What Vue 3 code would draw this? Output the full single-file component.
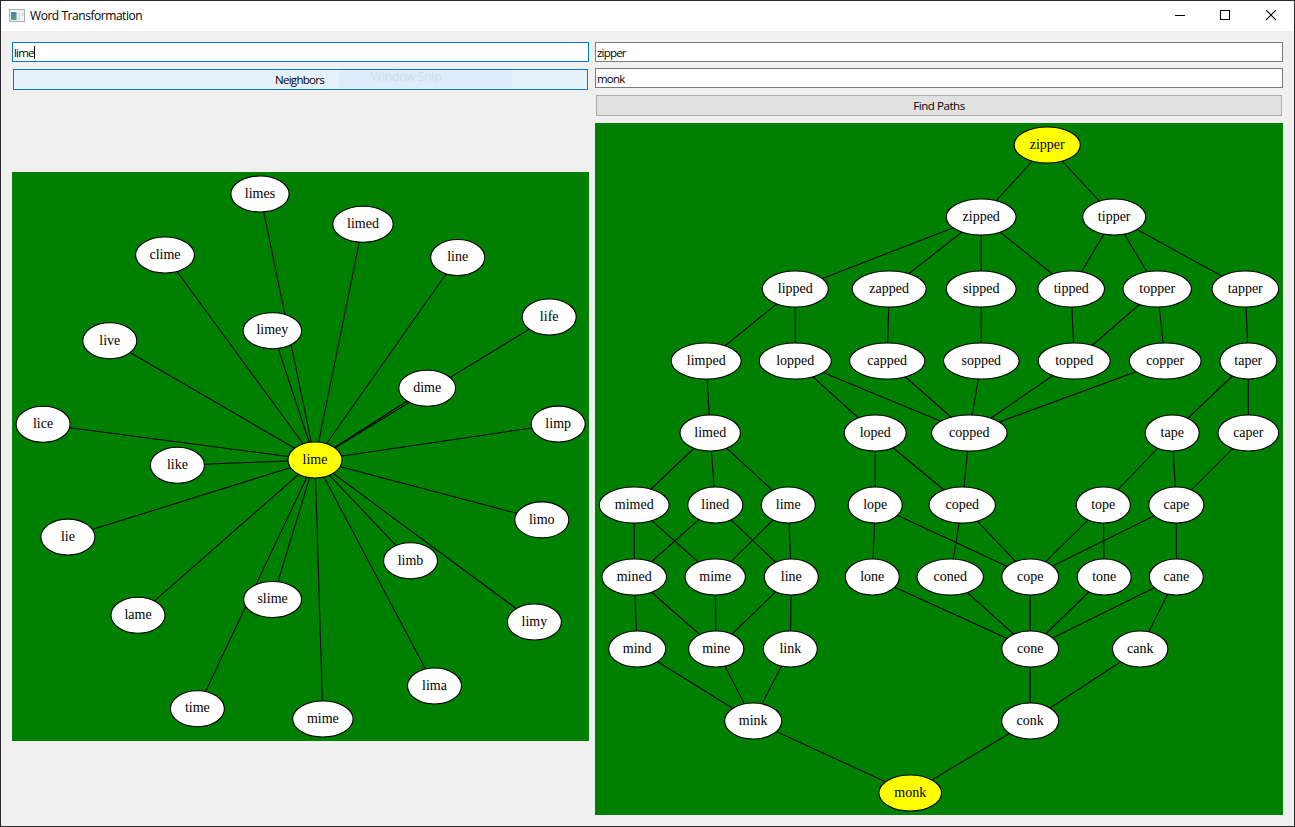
<script setup>
import { ref } from 'vue'

const word = ref('lime')
const start = ref('zipper')
const goal = ref('monk')

const build = (rows, links) => {
  const nodes = rows.map(([id, x, y, rx, hot]) => ({ id, x, y, rx, hot: !!hot }))
  const at = Object.fromEntries(nodes.map((n) => [n.id, n]))
  const edges = links.map(([a, b]) => ({ key: a + '-' + b, a: at[a], b: at[b] }))
  return { nodes, edges }
}

const around = [
  ['limes', 260, 194, 29.1], ['limed', 363, 224.2, 30.2], ['line', 457.7, 257.5, 27],
  ['clime', 165, 255, 29.4], ['limey', 272.4, 330.7, 29.3], ['life', 549.2, 317, 27],
  ['live', 109.8, 340.8, 27], ['dime', 427.2, 388.2, 28.4], ['limp', 558.2, 424.1, 27],
  ['lice', 43.1, 424.2, 27], ['like', 177.4, 465.2, 27], ['lie', 67.9, 537.1, 27],
  ['limo', 541.8, 519.9, 27], ['limb', 410.5, 560.8, 27], ['slime', 272.6, 599.5, 29],
  ['lame', 138, 615.3, 27], ['limy', 534.4, 622, 27], ['lima', 434.5, 686, 27],
  ['time', 197.4, 708.7, 27], ['mime', 322.9, 719, 30.2]
]
const neighbors = build(
  [...around, ['lime', 315, 460, 27, true]],
  around.map(([id]) => ['lime', id])
)

const paths = build(
  [
    ['zipper', 1047.2, 145, 33.1, true],
    ['zipped', 981.2, 217, 34.9], ['tipper', 1114.2, 217, 31.5],
    ['lipped', 795.3, 289, 33], ['zapped', 889.2, 289, 37], ['sipped', 981.2, 289, 34.9],
    ['tipped', 1071.2, 289, 33.3], ['topper', 1157.2, 289, 34.2], ['tapper', 1245.3, 289, 33.3],
    ['limped', 706.2, 361, 35], ['lopped', 795.3, 361, 36], ['capped', 887.2, 361, 37.6],
    ['sopped', 981.3, 361, 37.8], ['topped', 1074.2, 361, 36], ['copper', 1165.2, 361, 35.9],
    ['taper', 1248.3, 361, 28.4],
    ['limed', 710.2, 433, 30.2], ['loped', 875.2, 433, 31], ['copped', 969.3, 433, 37.8],
    ['tape', 1172.2, 433, 27], ['caper', 1248.3, 433, 30.3],
    ['mimed', 634.2, 505, 34.9], ['lined', 715.3, 505, 27.5], ['lime', 788.3, 505, 27],
    ['lope', 875.2, 505, 27], ['coped', 962.2, 505, 33.2], ['tope', 1103.3, 505, 27],
    ['cape', 1176.3, 505, 27.5],
    ['mined', 634.2, 577, 32.3], ['mime', 715.2, 577, 30.2], ['line', 791.3, 577, 27],
    ['lone', 872.3, 577, 27], ['coned', 950.2, 577, 33.2], ['cope', 1030.2, 577, 28.4],
    ['tone', 1104.2, 577, 27], ['cane', 1176.3, 577, 27],
    ['mind', 637.2, 649, 28.5], ['mine', 716.2, 649, 27.6], ['link', 790.3, 649, 27],
    ['cone', 1030.2, 649, 28.4], ['cank', 1140.2, 649, 27.7],
    ['mink', 753.2, 721, 28.5], ['conk', 1030.2, 721, 28.5],
    ['monk', 910.2, 793, 31.3, true]
  ],
  [
    ['zipper', 'zipped'], ['zipper', 'tipper'],
    ['zipped', 'lipped'], ['zipped', 'zapped'], ['zipped', 'sipped'], ['zipped', 'tipped'],
    ['tipper', 'tipped'], ['tipper', 'topper'], ['tipper', 'tapper'],
    ['lipped', 'limped'], ['lipped', 'lopped'], ['zapped', 'capped'], ['sipped', 'sopped'],
    ['tipped', 'topped'], ['topper', 'topped'], ['topper', 'copper'], ['tapper', 'taper'],
    ['limped', 'limed'], ['lopped', 'loped'], ['lopped', 'copped'], ['capped', 'copped'],
    ['sopped', 'copped'], ['topped', 'copped'], ['copper', 'copped'],
    ['taper', 'tape'], ['taper', 'caper'],
    ['limed', 'mimed'], ['limed', 'lined'], ['limed', 'lime'],
    ['loped', 'lope'], ['loped', 'coped'], ['copped', 'coped'],
    ['tape', 'tope'], ['tape', 'cape'], ['caper', 'cape'],
    ['mimed', 'mined'], ['mimed', 'mime'], ['lined', 'mined'], ['lined', 'line'],
    ['lime', 'mime'], ['lime', 'line'],
    ['lope', 'lone'], ['lope', 'cope'], ['coped', 'coned'], ['coped', 'cope'],
    ['tope', 'cope'], ['tope', 'tone'], ['cape', 'cope'], ['cape', 'cane'],
    ['mined', 'mind'], ['mined', 'mine'], ['mime', 'mine'], ['line', 'mine'], ['line', 'link'],
    ['lone', 'cone'], ['coned', 'cone'], ['cope', 'cone'], ['tone', 'cone'], ['cane', 'cone'],
    ['cane', 'cank'],
    ['mind', 'mink'], ['mine', 'mink'], ['link', 'mink'],
    ['cone', 'conk'], ['cank', 'conk'],
    ['mink', 'monk'], ['conk', 'monk']
  ]
)

const charts = [
  { graph: neighbors, viewBox: '12 172 577 569' },
  { graph: paths, viewBox: '595 123 688 692' }
]
</script>

<template>
  <div class="window">
    <header class="titlebar">
      <svg class="app-icon" width="16" height="14" viewBox="0 0 16 14">
        <defs>
          <linearGradient id="pane" x1="0" y1="0" x2="0.6" y2="1">
            <stop offset="0" stop-color="#4a7fa8" />
            <stop offset="1" stop-color="#4f9f80" />
          </linearGradient>
        </defs>
        <rect x="0.5" y="0.5" width="15" height="12" fill="#eef0f1" stroke="#a9adb3" />
        <rect x="2" y="3" width="5.5" height="8" fill="url(#pane)" />
        <rect x="8.5" y="3" width="2.5" height="8" fill="#dfe3e6" />
        <rect x="12" y="3" width="2.5" height="4" fill="#d6e8dc" />
      </svg>
      <span class="title">Word Transformation</span>
      <div class="controls">
        <svg width="46" height="30" viewBox="0 0 46 30"><path d="M18 14.5h10" /></svg>
        <svg width="46" height="30" viewBox="0 0 46 30"><rect x="17.5" y="9.5" width="9" height="9" /></svg>
        <svg class="cross" width="46" height="30" viewBox="0 0 46 30"><path d="M17.2 9.2l9.6 9.6M26.8 9.2l-9.6 9.6" /></svg>
      </div>
    </header>
    <main class="content">
      <section class="left">
        <div class="field focused"><span>{{ word }}</span><i class="caret"></i></div>
        <button class="btn hover">
          <span>Neighbors</span>
          <span class="ghost">Window Snip</span>
        </button>
        <div class="middle">
          <svg class="chart" width="577" height="569" :viewBox="charts[0].viewBox">
            <line v-for="e in charts[0].graph.edges" :key="e.key" :x1="e.a.x" :y1="e.a.y" :x2="e.b.x" :y2="e.b.y" />
            <g v-for="n in charts[0].graph.nodes" :key="n.id">
              <ellipse :class="{ hot: n.hot }" :cx="n.x" :cy="n.y" :rx="n.rx" ry="18" />
              <text :x="n.x" :y="n.y + 3.7">{{ n.id }}</text>
            </g>
          </svg>
        </div>
      </section>
      <section class="right">
        <div class="field"><span>{{ start }}</span></div>
        <div class="field second"><span>{{ goal }}</span></div>
        <button class="btn"><span>Find Paths</span></button>
        <svg class="chart" width="688" height="692" :viewBox="charts[1].viewBox">
          <line v-for="e in charts[1].graph.edges" :key="e.key" :x1="e.a.x" :y1="e.a.y" :x2="e.b.x" :y2="e.b.y" />
          <g v-for="n in charts[1].graph.nodes" :key="n.id">
            <ellipse :class="{ hot: n.hot }" :cx="n.x" :cy="n.y" :rx="n.rx" ry="18" />
            <text :x="n.x" :y="n.y + 3.7">{{ n.id }}</text>
          </g>
        </svg>
      </section>
    </main>
  </div>
</template>

<style>
body { margin: 0; overflow: hidden; }
</style>

<style scoped>
.window {
  box-sizing: border-box;
  width: 1295px;
  height: 827px;
  border: 1px solid #2b292e;
  background: #f0f0f0;
  display: flex;
  flex-direction: column;
  color: #000;
}
.titlebar {
  height: 30px;
  flex: none;
  background: #fff;
  display: flex;
  align-items: center;
}
.app-icon { margin: -1px 5px 0 8px; }
.title {
  font: 12px/30px "Open Sans", "Noto Sans", sans-serif;
  letter-spacing: -0.45px;
  flex: 1;
}
.controls { display: flex; margin-right: -1px; }
.controls svg { fill: none; stroke: #000; stroke-width: 1; shape-rendering: crispEdges; }
.controls .cross { shape-rendering: auto; stroke-width: 1.1; }
.content {
  flex: 1;
  display: flex;
  gap: 6px;
  padding: 11px 11px 11px;
}
.left, .right { display: flex; flex-direction: column; }
.left { width: 577px; }
.right { width: 688px; }
.field {
  box-sizing: border-box;
  height: 20px;
  flex: none;
  border: 1px solid #7a7a7a;
  background: #fff;
  display: flex;
  align-items: center;
  padding: 2px 1px 0;
  font: 11.5px/16px "Open Sans", "Noto Sans", sans-serif;
  letter-spacing: -0.8px;
}
.second { margin-top: 6px; }
.focused { border-color: #0078d7; }
.caret { width: 1px; height: 13px; margin-top: -1px; background: #000; }
.btn {
  box-sizing: border-box;
  position: relative;
  flex: none;
  height: 21px;
  margin: 7px 1px 0;
  padding: 0;
  border: 1px solid #adadad;
  background: #e1e1e1;
  color: #000;
  display: flex;
  align-items: center;
  justify-content: center;
  font: 11.5px/16px "Open Sans", "Noto Sans", sans-serif;
  letter-spacing: -0.45px;
}
.hover { border-color: #0078d7; background: #e5f1fb; padding-right: 2px; letter-spacing: -0.7px; }
.ghost {
  position: absolute;
  box-sizing: border-box;
  left: 325px;
  top: -4px;
  width: 173px;
  height: 22px;
  padding-left: 32px;
  text-align: left;
  background: linear-gradient(rgba(200, 215, 225, 0.1) 3px, transparent 3px, transparent 4px, rgba(145, 201, 247, 0.1) 4px);
  color: #d0deea;
  font: 12px/22px "Open Sans", "Noto Sans", sans-serif;
  letter-spacing: -0.2px;
}
.middle { flex: 1; display: flex; align-items: center; padding-top: 7px; }
.right .chart { margin-top: 7px; }
.chart { display: block; flex: none; background: #008000; }
.chart line { stroke: #000; stroke-width: 1.05; }
.chart ellipse { fill: #fff; stroke: #000; stroke-width: 1.1; }
.chart ellipse.hot { fill: #ff0; }
.chart text { font: 14px "Liberation Serif", serif; text-anchor: middle; }
</style>
